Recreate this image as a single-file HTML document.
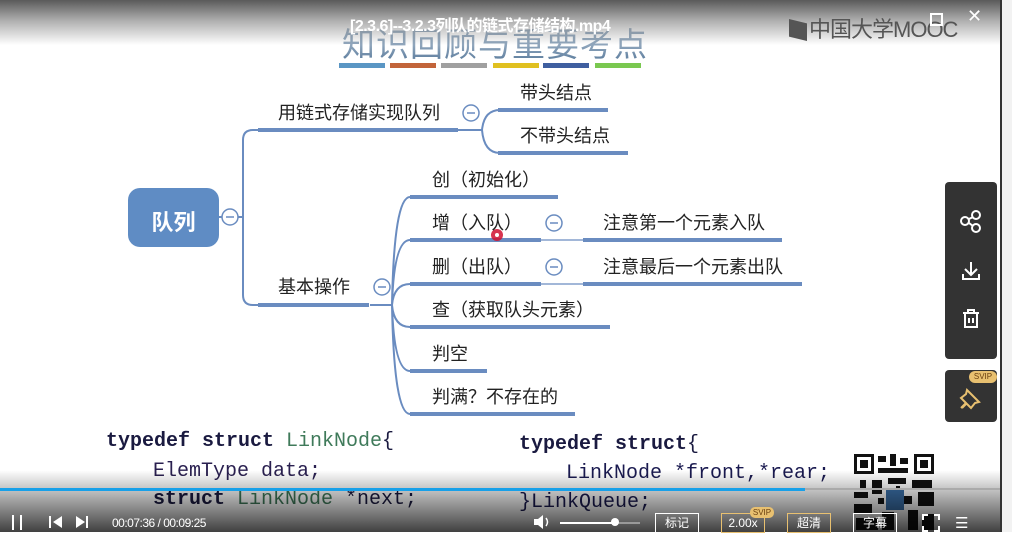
<!DOCTYPE html>
<html><head><meta charset="utf-8"><style>
body{margin:0;width:1012px;height:532px;overflow:hidden;background:#fff;position:relative;font-family:"Liberation Sans","Noto Sans CJK SC",sans-serif}
.abs{position:absolute}
.t{position:absolute;font-size:18px;color:#222;white-space:nowrap;line-height:20px}
.code{position:absolute;font-family:"Liberation Mono","DejaVu Sans Mono",monospace;font-size:20px;font-weight:bold;color:#1a1a40;white-space:nowrap}
.g{color:#3f7a5a;font-weight:normal}
.btn{position:absolute;top:513px;height:18px;border:1px solid #fff;color:#fff;font-size:12px;line-height:18px;text-align:center}
</style></head><body>
<div class="abs" style="left:0;top:18px;width:1000px;text-align:center;font-size:33px;color:#5f7f9f;letter-spacing:1px"><span style="margin-left:-10px">知识回顾与重要考点</span></div>
<div class="abs" style="left:0;top:0;width:1000px;height:60px;background:linear-gradient(rgba(90,90,90,1) 0%,rgba(150,150,150,.75) 35%,rgba(255,255,255,.3) 75%,rgba(255,255,255,0) 100%)"></div>
<div class="abs" style="left:350px;top:12px;font-size:16px;color:#fff;font-weight:bold;letter-spacing:-.5px">[2.3.6]--3.2.3列队的链式存储结构.mp4</div>
<div class="abs" style="left:789px;top:12px;font-size:22px;color:#555;letter-spacing:-1px"><span style="display:inline-block;width:18px;height:22px;background:#555;vertical-align:-4px;margin-right:2px;clip-path:polygon(0 0,100% 20%,100% 100%,0 80%)"></span>中国大学MOOC</div>
<div class="abs" style="left:930px;top:13px;width:9px;height:9px;border:2px solid #fff"></div>
<div class="abs" style="left:967px;top:6px;color:#fff;font-size:18px">✕</div>
<div class="abs" style="left:339px;top:63px;width:46px;height:5px;background:#5a96c4"></div>
<div class="abs" style="left:390px;top:63px;width:46px;height:5px;background:#c2643a"></div>
<div class="abs" style="left:441px;top:63px;width:46px;height:5px;background:#a0a0a0"></div>
<div class="abs" style="left:493px;top:63px;width:46px;height:5px;background:#e0c020"></div>
<div class="abs" style="left:543px;top:63px;width:46px;height:5px;background:#3f5fa0"></div>
<div class="abs" style="left:595px;top:63px;width:46px;height:5px;background:#7ac850"></div>
<div class="abs" style="left:1000px;top:0;width:2px;height:532px;background:#333"></div>
<div class="abs" style="left:1002px;top:0;width:10px;height:532px;background:#f2f2f2"></div>
<svg class="abs" style="left:0;top:0" width="1000" height="532">
<g fill="none" stroke="#6a8cc0" stroke-width="2">
<path d="M219 217 H243 M243 217 V140 Q243 130 253 130 H258 M243 217 V295 Q243 305 253 305 H258"/>
<path d="M458 130 H482 M482 130 Q484 110 500 110 M482 130 Q484 153 500 153"/>
<path d="M370 305 H392 M392 305 Q394 197 410 197 M392 305 Q394 240 410 240 M392 305 Q394 284 410 284 M392 305 Q394 327 410 327 M392 305 Q394 371 410 371 M392 305 Q394 414 410 414"/>
<path d="M541 240 H583 M541 284 H583" stroke-width="1.2"/>
</g>
<g stroke="#6a8cc0" stroke-width="4">
<path d="M258 130 H458 M498 110 H608 M498 153 H628 M258 305 H369 M410 197 H558 M410 240 H541 M583 240 H782 M410 284 H541 M583 284 H802 M410 327 H610 M410 371 H487 M410 414 H575"/>
</g>
<rect x="128" y="188" width="91" height="59" rx="12" fill="#5f8cc4"/>
<g fill="#fff" stroke="#6a8cc0" stroke-width="1.5"><circle cx="230" cy="217" r="8"/><circle cx="471" cy="113" r="8"/><circle cx="382" cy="287" r="8"/><circle cx="554" cy="223" r="8"/><circle cx="554" cy="267" r="8"/></g>
<g stroke="#6a8cc0" stroke-width="1.5"><path d="M226 217h8M467 113h8M378 287h8M550 223h8M550 267h8"/></g>
<circle cx="497" cy="235" r="6" fill="#d01030" opacity=".85"/><circle cx="497" cy="235" r="2" fill="#fff"/>
</svg>
<div class="abs" style="left:128px;top:205px;width:91px;text-align:center;color:#fff;font-size:22px;font-weight:bold">队列</div>
<div class="t" style="left:278px;top:103px">用链式存储实现队列</div>
<div class="t" style="left:520px;top:83px">带头结点</div>
<div class="t" style="left:520px;top:126px">不带头结点</div>
<div class="t" style="left:278px;top:277px">基本操作</div>
<div class="t" style="left:432px;top:170px">创（初始化）</div>
<div class="t" style="left:432px;top:213px">增（入队）</div>
<div class="t" style="left:603px;top:213px">注意第一个元素入队</div>
<div class="t" style="left:432px;top:257px">删（出队）</div>
<div class="t" style="left:603px;top:257px">注意最后一个元素出队</div>
<div class="t" style="left:432px;top:300px">查（获取队头元素）</div>
<div class="t" style="left:432px;top:344px">判空</div>
<div class="t" style="left:432px;top:387px">判满？不存在的</div>
<div class="code" style="left:106px;top:430px">typedef struct <span class="g">LinkNode</span><span style="font-weight:normal">{</span></div>
<div class="code" style="left:153px;top:460px;font-weight:normal;color:#2a2050">ElemType data;</div>
<div class="code" style="left:153px;top:488px">struct <span class="g">LinkNode</span> <span style="font-weight:normal">*next;</span></div>
<div class="code" style="left:519px;top:433px">typedef struct<span style="font-weight:normal">{</span></div>
<div class="code" style="left:566px;top:462px;font-weight:normal;color:#1a1a50">LinkNode *front,*rear;</div>
<div class="code" style="left:519px;top:491px;font-weight:normal;color:#1a1a50">}LinkQueue;</div>
<svg class="abs" style="left:852px;top:452px" width="84" height="80">
<rect width="84" height="80" fill="#fff"/>
<g fill="#111">
<rect x="2" y="2" width="20" height="20"/><rect x="62" y="2" width="20" height="20"/>
<rect x="8" y="28" width="6" height="8"/><rect x="26" y="4" width="8" height="6"/><rect x="38" y="2" width="6" height="12"/><rect x="48" y="6" width="8" height="6"/>
<rect x="26" y="16" width="30" height="5"/><rect x="2" y="40" width="14" height="6"/><rect x="20" y="28" width="10" height="14"/><rect x="60" y="28" width="20" height="8"/><rect x="66" y="40" width="16" height="14"/>
<rect x="2" y="52" width="18" height="10"/><rect x="4" y="66" width="22" height="12"/><rect x="30" y="60" width="12" height="18"/><rect x="56" y="58" width="10" height="20"/><rect x="70" y="62" width="12" height="16"/><rect x="36" y="26" width="18" height="6"/>
<rect x="44" y="34" width="4" height="4"/><rect x="26" y="46" width="6" height="6"/><rect x="52" y="44" width="8" height="8"/>
</g>
<g fill="#fff"><rect x="5" y="5" width="14" height="14"/><rect x="65" y="5" width="14" height="14"/></g>
<g fill="#111"><rect x="8" y="8" width="8" height="8"/><rect x="68" y="8" width="8" height="8"/></g>
<rect x="34" y="36" width="18" height="22" fill="#3a6fa8"/>
</svg>
<div class="abs" style="left:945px;top:182px;width:52px;height:177px;background:#333;border-radius:4px"></div>
<svg class="abs" style="left:945px;top:182px" width="52" height="177" fill="none" stroke="#fff" stroke-width="2">
<circle cx="20" cy="39" r="4"/><circle cx="31" cy="33" r="4"/><circle cx="31" cy="46" r="4"/><path d="M24 37l4-2M24 41l4 3"/>
<path d="M26 80v12M20 87l6 6 6-6M18 92v5h16v-5"/>
<path d="M18 131h16M23 131v-3h6v3M20 131v14h12v-14M24 136v5M28 136v5"/>
</svg>
<div class="abs" style="left:945px;top:370px;width:52px;height:52px;background:#333;border-radius:4px"></div>
<div class="abs" style="left:969px;top:371px;width:28px;height:12px;background:#e8c070;border-radius:6px;font-size:8px;color:#6a4010;text-align:center;line-height:12px">SVIP</div>
<svg class="abs" style="left:945px;top:370px" width="52" height="52" fill="none" stroke="#e8c070" stroke-width="2"><path d="M22 20l12 12-4 1-4 5-5-5-5 5 0 0 5-5-5-5 5-4z M17 38l5-5"/></svg>
<div class="abs" style="left:0;top:470px;width:1000px;height:62px;background:linear-gradient(rgba(0,0,0,0),rgba(0,0,0,.75))"></div>
<div class="abs" style="left:0;top:488px;width:805px;height:3px;background:#18a0e8"></div>
<div class="abs" style="left:805px;top:488px;width:195px;height:2px;background:#aaa"></div>
<div class="abs" style="left:12px;top:515px;width:2px;height:15px;background:#fff"></div>
<div class="abs" style="left:20px;top:515px;width:2px;height:15px;background:#fff"></div>
<svg class="abs" style="left:48px;top:514px" width="50" height="16" fill="#fff"><rect x="1" y="2" width="2" height="12"/><path d="M14 2v12l-9-6z"/><path d="M28 2v12l9-6z"/><rect x="38" y="2" width="2" height="12"/></svg>
<div class="abs" style="left:112px;top:516px;color:#fff;font-size:12px;letter-spacing:-.5px">00:07:36 / 00:09:25</div>
<svg class="abs" style="left:533px;top:514px" width="20" height="16" fill="#fff"><path d="M1 5h4l5-4v14l-5-4h-4z"/><path d="M13 4q3 4 0 8" fill="none" stroke="#fff" stroke-width="1.5"/></svg>
<div class="abs" style="left:560px;top:522px;width:55px;height:2px;background:#fff"></div>
<div class="abs" style="left:615px;top:522px;width:25px;height:2px;background:#999"></div>
<div class="abs" style="left:611px;top:518px;width:8px;height:8px;background:#fff;border-radius:50%"></div>
<div class="btn" style="left:655px;width:42px">标记</div>
<div class="btn" style="left:721px;width:42px;border-color:#e8c070">2.00x</div>
<div class="abs" style="left:750px;top:507px;width:24px;height:11px;background:#e8c070;border-radius:5px;font-size:8px;color:#6a4010;text-align:center;line-height:11px">SVIP</div>
<div class="btn" style="left:787px;width:42px;border-color:#e8c070">超清</div>
<div class="btn" style="left:853px;width:42px">字幕</div>
<div class="abs" style="left:922px;top:514px;width:14px;height:14px;border:2px dashed #fff"></div>
<div class="abs" style="left:955px;top:514px;color:#fff;font-size:15px">☰</div>
</body></html>
